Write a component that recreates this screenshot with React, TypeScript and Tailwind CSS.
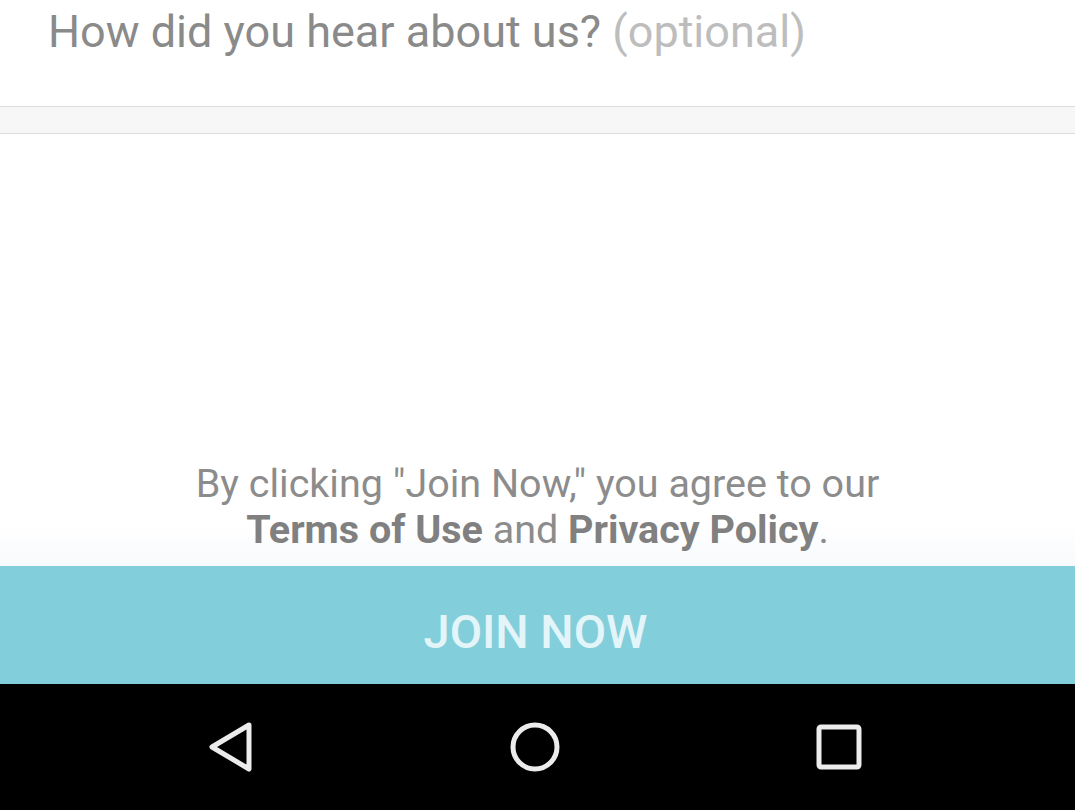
import { useState } from "react";

function BackIcon() {
    return (
        <svg width="48" height="52" viewBox="0 0 48 52" fill="none">
            <path d="M42 4 L5 26 L42 48 Z" stroke="#ececec" strokeWidth="5" strokeLinejoin="round" />
        </svg>
    )
}

function HomeIcon() {
    return (
        <svg width="52" height="52" viewBox="0 0 52 52" fill="none">
            <circle cx="26" cy="26" r="22" stroke="#ececec" strokeWidth="5" />
        </svg>
    )
}

function RecentsIcon() {
    return (
        <svg width="46" height="46" viewBox="0 0 46 46" fill="none">
            <rect x="3" y="3" width="40" height="40" rx="2" stroke="#ececec" strokeWidth="5" />
        </svg>
    )
}

export default function App() {
    const [origem] = useState("")

    return (
        <div className="w-[1075px] h-[810px] flex flex-col bg-white font-['Roboto',sans-serif] overflow-hidden">
            <div className="h-[106px] shrink-0 px-[48px] pt-[4px]">
                <p className="text-[45px] leading-[56px] text-[#8a8a8a]">
                    {origem || "How did you hear about us?"} <span className="text-[#bdbdbd]">(optional)</span>
                </p>
            </div>
            <div className="h-[28px] shrink-0 bg-[#f7f7f7] border-y border-[#dcdcdc]"></div>
            <div className="flex-1 flex flex-col justify-end items-center pb-[13px] bg-gradient-to-b from-white from-90% to-[#f8fafc]">
                <p className="text-center text-[39.5px] leading-[46px] text-[#8c8c8c]">
                    By clicking "Join Now," you agree to our
                    <br />
                    <span className="font-bold text-[#808080]">Terms of Use</span> and <span className="font-bold text-[#808080]">Privacy Policy</span>.
                </p>
            </div>
            <button className="h-[118px] shrink-0 w-full bg-[#82cedb] text-[#e3f5f8] text-[47px] font-medium pt-[14px] pr-[4px]">
                JOIN NOW
            </button>
            <div className="h-[126px] shrink-0 bg-black flex items-center justify-center pr-[5px]">
                <div className="w-[304px] flex justify-center"><BackIcon /></div>
                <div className="w-[304px] flex justify-center"><HomeIcon /></div>
                <div className="w-[304px] flex justify-center"><RecentsIcon /></div>
            </div>
        </div>
    )
}
